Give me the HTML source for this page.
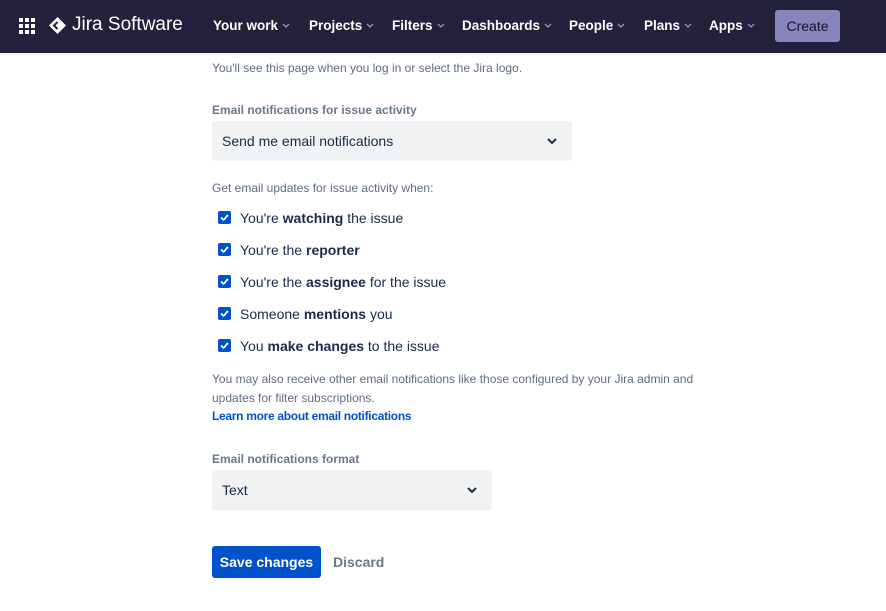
<!DOCTYPE html>
<html><head><meta charset="utf-8"><style>
*{box-sizing:border-box;margin:0;padding:0}
body{width:886px;height:611px;background:#fff;font-family:"Liberation Sans",sans-serif;color:#172b4d;position:relative;overflow:hidden}
.nav{position:absolute;left:0;top:0;width:886px;height:53px;background:#23213b}
.nav .it{position:absolute;top:18px;color:#fff;font-weight:bold;font-size:13.5px;white-space:nowrap}
.nav .it svg{margin-left:4px;vertical-align:2px}
.create{position:absolute;left:775px;top:10px;width:65px;height:32px;background:#8785be;border-radius:3px;color:#14132a;font-size:14px;text-align:center;line-height:32px}
.a{position:absolute}
.s{font-size:12px;color:#5e6c84}
.lbl{font-size:12px;font-weight:bold;color:#6b778c}
.sel{position:absolute;background:#f1f2f4;border-radius:3px;font-size:14px;color:#172b4d;padding:0 10px;line-height:40px;height:40px}
.cb{position:absolute;left:218px;width:13px;height:13px;background:#0052cc;border-radius:2px}
.cb svg{position:absolute;left:2px;top:2px}
.ct{position:absolute;left:240px;font-size:14px;color:#172b4d}
</style></head><body>
<div class="nav">
<svg class="a" style="left:19px;top:18px" width="16" height="16"><g fill="#fff"><rect x="0" y="0" width="4" height="4"/><rect x="6" y="0" width="4" height="4"/><rect x="12" y="0" width="4" height="4"/><rect x="0" y="6" width="4" height="4"/><rect x="6" y="6" width="4" height="4"/><rect x="12" y="6" width="4" height="4"/><rect x="0" y="12" width="4" height="4"/><rect x="6" y="12" width="4" height="4"/><rect x="12" y="12" width="4" height="4"/></g></svg>
<svg class="a" style="left:48px;top:16px" width="19" height="19"><path d="M9.5 1 L18 9.5 L9.5 18 L1 9.5Z" fill="#fff"/><path d="M9.5 6 L6 9.5 L9.5 13" stroke="#23213b" stroke-width="2" fill="none"/></svg>
<div class="a" style="left:72px;top:14px;color:#fff;font-size:19px">Jira Software</div>
<div class="it" style="left:213px">Your work<svg width="8" height="5"><path d="M1 1l3 3 3-3" stroke="#9a98b0" stroke-width="1.3" fill="none"/></svg></div>
<div class="it" style="left:309px">Projects<svg width="8" height="5"><path d="M1 1l3 3 3-3" stroke="#9a98b0" stroke-width="1.3" fill="none"/></svg></div>
<div class="it" style="left:392px">Filters<svg width="8" height="5"><path d="M1 1l3 3 3-3" stroke="#9a98b0" stroke-width="1.3" fill="none"/></svg></div>
<div class="it" style="left:462px">Dashboards<svg width="8" height="5"><path d="M1 1l3 3 3-3" stroke="#9a98b0" stroke-width="1.3" fill="none"/></svg></div>
<div class="it" style="left:569px">People<svg width="8" height="5"><path d="M1 1l3 3 3-3" stroke="#9a98b0" stroke-width="1.3" fill="none"/></svg></div>
<div class="it" style="left:644px">Plans<svg width="8" height="5"><path d="M1 1l3 3 3-3" stroke="#9a98b0" stroke-width="1.3" fill="none"/></svg></div>
<div class="it" style="left:709px">Apps<svg width="8" height="5"><path d="M1 1l3 3 3-3" stroke="#9a98b0" stroke-width="1.3" fill="none"/></svg></div>
<div class="create">Create</div>
</div>
<div class="a" style="left:0;top:53px;width:886px;height:3px;background:#f4f5f7"></div>
<div class="a s" style="left:212px;top:61px">You'll see this page when you log in or select the Jira logo.</div>
<div class="a lbl" style="left:212px;top:103px">Email notifications for issue activity</div>
<div class="sel" style="left:212px;top:121px;width:360px">Send me email notifications<svg class="a" style="right:15px;top:17px" width="10" height="7"><path d="M1 1l4 4 4-4" stroke="#172b4d" stroke-width="2" fill="none"/></svg></div>
<div class="a s" style="left:212px;top:181px">Get email updates for issue activity when:</div>
<div class="cb" style="top:211px"><svg width="9" height="9"><path d="M1 4.5l2.5 2.5 4.5-5" stroke="#fff" stroke-width="1.8" fill="none"/></svg></div>
<div class="ct" style="top:210px">You're <b>watching</b> the issue</div>
<div class="cb" style="top:243px"><svg width="9" height="9"><path d="M1 4.5l2.5 2.5 4.5-5" stroke="#fff" stroke-width="1.8" fill="none"/></svg></div>
<div class="ct" style="top:242px">You're the <b>reporter</b></div>
<div class="cb" style="top:275px"><svg width="9" height="9"><path d="M1 4.5l2.5 2.5 4.5-5" stroke="#fff" stroke-width="1.8" fill="none"/></svg></div>
<div class="ct" style="top:274px">You're the <b>assignee</b> for the issue</div>
<div class="cb" style="top:307px"><svg width="9" height="9"><path d="M1 4.5l2.5 2.5 4.5-5" stroke="#fff" stroke-width="1.8" fill="none"/></svg></div>
<div class="ct" style="top:306px">Someone <b>mentions</b> you</div>
<div class="cb" style="top:339px"><svg width="9" height="9"><path d="M1 4.5l2.5 2.5 4.5-5" stroke="#fff" stroke-width="1.8" fill="none"/></svg></div>
<div class="ct" style="top:338px">You <b>make changes</b> to the issue</div>
<div class="a s" style="left:212px;top:370px;line-height:19px;width:500px">You may also receive other email notifications like those configured by your Jira admin and<br>updates for filter subscriptions.</div>
<div class="a" style="left:212px;top:409px;font-size:12px;font-weight:bold;color:#0052cc;letter-spacing:-0.3px">Learn more about email notifications</div>
<div class="a lbl" style="left:212px;top:452px">Email notifications format</div>
<div class="sel" style="left:212px;top:470px;width:280px">Text<svg class="a" style="right:15px;top:17px" width="10" height="7"><path d="M1 1l4 4 4-4" stroke="#172b4d" stroke-width="2" fill="none"/></svg></div>
<div class="a" style="left:212px;top:546px;width:109px;height:32px;background:#0052cc;border-radius:3px;color:#fff;font-weight:bold;font-size:14px;text-align:center;line-height:32px">Save changes</div>
<div class="a" style="left:333px;top:554px;color:#6b778c;font-weight:bold;font-size:14px">Discard</div>
</body></html>
